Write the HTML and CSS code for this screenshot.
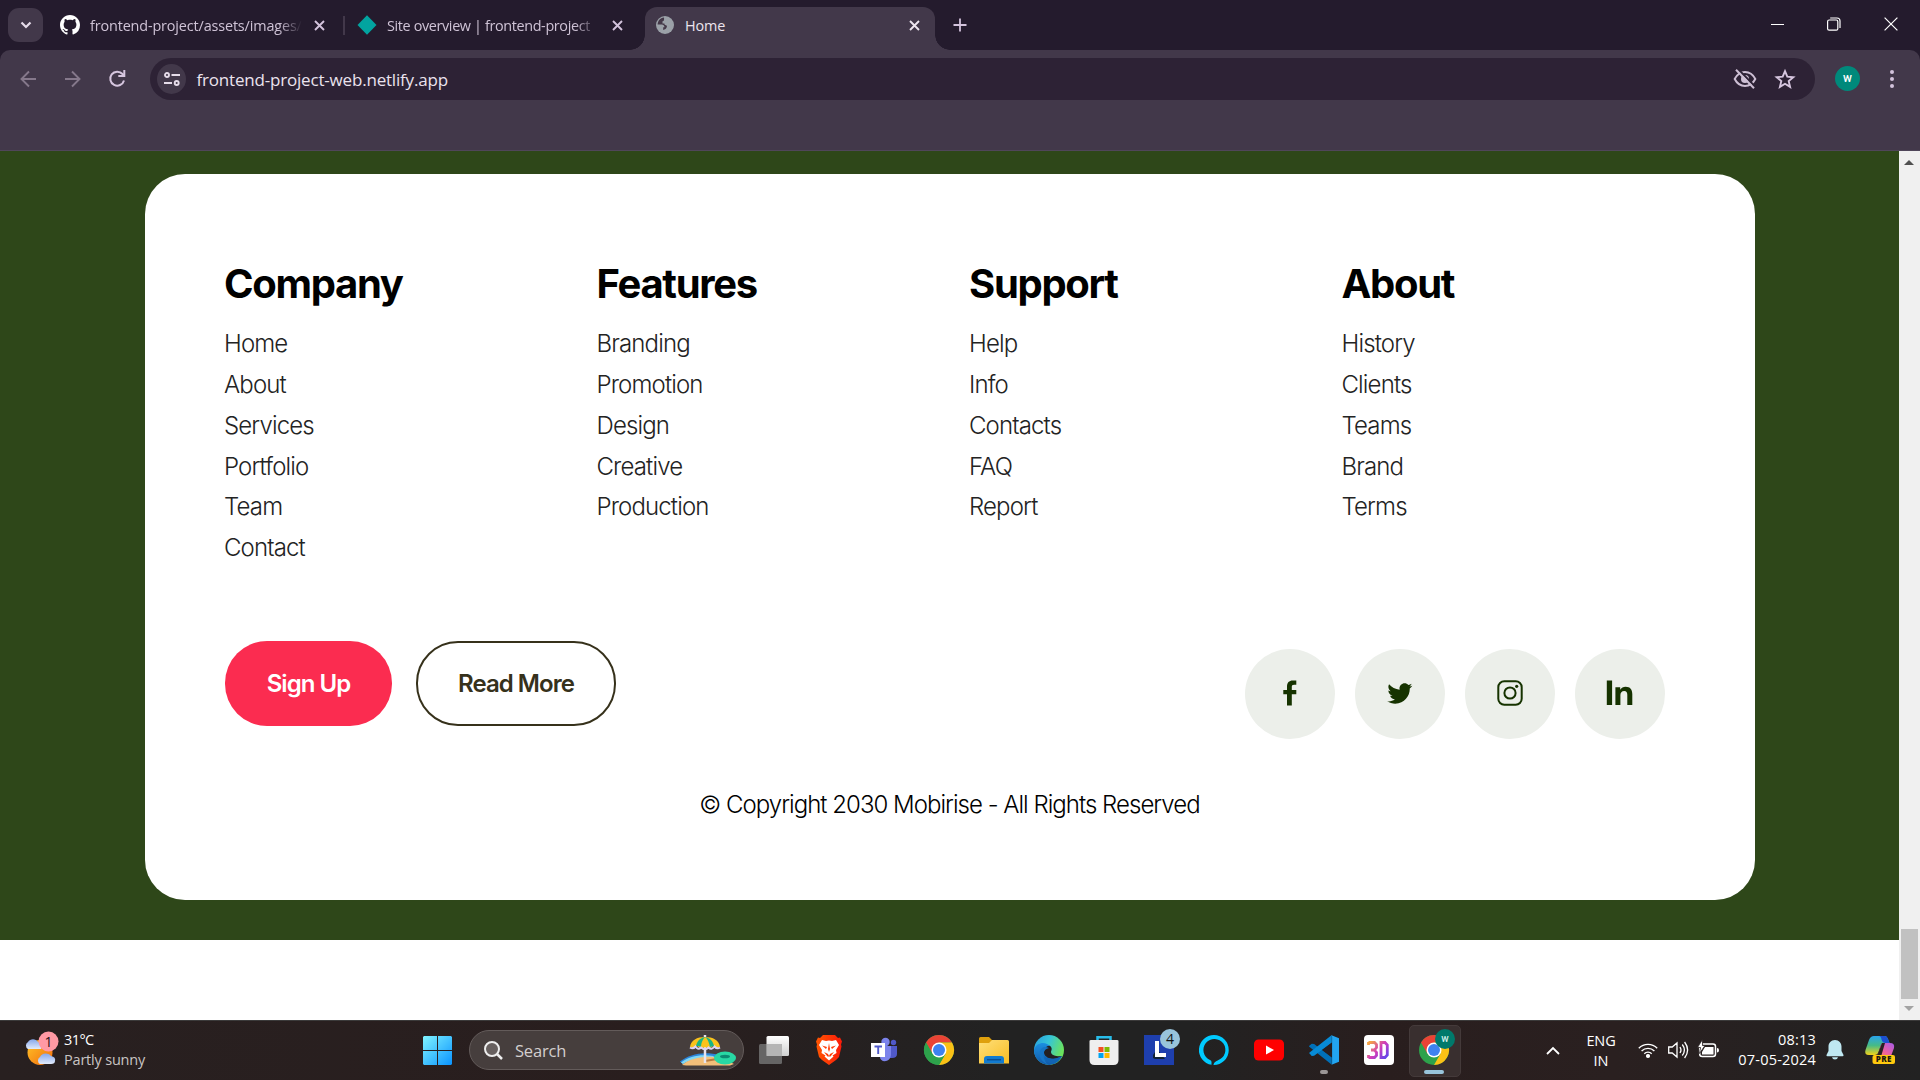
FILE: index.html
```html
<!DOCTYPE html>
<html lang="en">
<head>
<meta charset="utf-8">
<title>Home</title>
<link rel="stylesheet" href="styles.css">
</head>
<body>
<div class="screen">
  <header class="tabstrip">
    <div class="tab-search"><svg width="12" height="8" viewBox="0 0 12 8"><path d="M1.5 1.5 6 6l4.500-4.500" fill="none" stroke="#e6dcea" stroke-width="2.200"/></svg></div>
    <div class="tab tab-one">
      <svg width="20" height="20" viewBox="0 0 16 16"><path fill="#fff" d="M8 0C3.580 0 0 3.580 0 8c0 3.540 2.290 6.530 5.470 7.590.4.070.55-.17.55-.38 0-.19-.01-.82-.01-1.490-2.010.37-2.530-.49-2.690-.94-.09-.23-.48-.94-.82-1.130-.28-.15-.68-.52-.01-.53.63-.01 1.080.58 1.230.82.72 1.210 1.870.87 2.330.66.07-.52.28-.87.51-1.070-1.780-.2-3.640-.89-3.640-3.950 0-.87.31-1.590.82-2.150-.08-.2-.36-1.020.08-2.120 0 0 .67-.21 2.200.82.64-.18 1.320-.27 2-.27s1.360.09 2 .27c1.530-1.040 2.200-.82 2.200-.82.44 1.100.16 1.920.08 2.120.51.56.82 1.270.82 2.150 0 3.070-1.870 3.750-3.650 3.950.29.25.54.73.54 1.480 0 1.070-.01 1.930-.01 2.200 0 .21.15.46.55.38A8.010 8.010 0 0 0 16 8c0-4.420-3.580-8-8-8z"/></svg>
      <span class="tab-title">frontend-project/assets/images/</span>
      <svg class="x" width="11" height="11" viewBox="0 0 11 11"><path d="M1 1l9 9M10 1l-9 9"/></svg>
    </div>
    <i class="tab-sep"></i>
    <div class="tab tab-two">
      <svg width="20" height="20" viewBox="0 0 20 20"><path d="M10 .3 19.500 10 10 19.700.5 10z" fill="#02a4a0"/></svg>
      <span class="tab-title">Site overview | frontend-project</span>
      <svg class="x" width="11" height="11" viewBox="0 0 11 11"><path d="M1 1l9 9M10 1l-9 9"/></svg>
    </div>
    <div class="tab tab-active">
      <svg width="18" height="18" viewBox="0 0 18 18"><circle cx="9" cy="9" r="9" fill="#9ba1a8"/><path d="M8 1.600C4 2 1.800 5 1.600 8.600h4.200c1.500 0 2.700 1.200 2.700 2.700h-1.300v2.600c1.800 0 3.200-1.200 3.600-2.800.3-1 .1-1.800-.9-1.900-.9-.1-1.500-.8-1.500-1.700H6.500V5.300c1.700-.2 1.700-1.300 1.500-3.700z" fill="#443848"/><path d="M11.200 4.200c-.2 1.500.7 2.300 2 2.400.5 1.700 1.600 2.400 3 2 0-3-1.600-5.300-4-6.500-.7.500-1.200 1.200-1 2.100zM4 12.500c1.200 2 2.600 2.900 4.500 3.600" fill="#9ba1a8"/></svg>
      <span class="tab-title">Home</span>
      <svg class="x x-on" width="11" height="11" viewBox="0 0 11 11"><path d="M1 1l9 9M10 1l-9 9"/></svg>
    </div>
    <svg class="plus" width="14" height="14" viewBox="0 0 14 14"><path d="M7 .5v13M.5 7h13" stroke="#d3c3dc" stroke-width="1.800"/></svg>
    <div class="win">
      <svg width="14" height="14" viewBox="0 0 14 14"><path d="M1 7.500h13" stroke="#fff"/></svg>
      <svg width="14" height="14" viewBox="0 0 14 14" fill="none" stroke="#fff" stroke-width="1.200"><rect x=".6" y="3" width="10.200" height="10.200" rx="1.500"/><path d="M3.200 1H10c2 0 3 1.200 3 3v7"/></svg>
      <svg width="14" height="14" viewBox="0 0 14 14"><path d="M.6.6l12.800 12.800M13.400.6.6 13.400" stroke="#fff" stroke-width="1.200"/></svg>
    </div>
  </header>

  <div class="toolbar">
    <div class="bar">
      <svg width="16" height="18" viewBox="0 0 16 18" fill="none" stroke="#85788b" stroke-width="1.900"><path d="M16 9H1.500M9 1.500 1.500 9 9 16.500"/></svg>
      <svg class="fwd" width="16" height="18" viewBox="0 0 16 18" fill="none" stroke="#85788b" stroke-width="1.900"><path d="M0 9h14.500M7 1.500 14.500 9 7 16.500"/></svg>
      <svg class="reload" width="17" height="17" viewBox="0 0 17 17"><path d="M15 10.500A7 7 0 1 1 13.500 4l1.500 1.700" fill="none" stroke="#d6c6df" stroke-width="2"/><path d="M16.300 0v7H9.300V5h5V0z" fill="#d6c6df"/></svg>
      <div class="omnibox">
        <div class="site-info"><svg width="16" height="14" viewBox="0 0 16 14" fill="none" stroke="#e6dcea" stroke-width="1.900"><circle cx="3" cy="3" r="2"/><path d="M7.500 3H16M0 11h8"/><circle cx="12.700" cy="11" r="2"/></svg></div>
        <span class="url">frontend-project-web.netlify.app</span>
        <svg class="eye" width="24" height="20" viewBox="0 0 24 20" fill="none" stroke="#cdbfd4" stroke-width="2"><path d="M1.700 10C4 5.500 7.500 3 12 3s8 2.500 10.300 7C20 14.500 16.500 17 12 17S4 14.500 1.700 10z"/><circle cx="12" cy="10" r="4" fill="#cdbfd4" stroke="none"/><path d="M4.700-.3l18 18.500" stroke="#2d2235" stroke-width="2"/><path d="M3 .8l18 18.400"/></svg>
        <svg width="20" height="20" viewBox="0 0 20 20"><path d="M10 2.200l2.300 5.500 6 .5-4.600 3.900 1.400 5.800L10 14.800l-5.100 3.100 1.400-5.800L1.700 8.200l6-.5z" fill="none" stroke="#d6c6df" stroke-width="1.900"/></svg>
      </div>
      <div class="avatar">w</div>
      <svg class="dots" width="4" height="18" viewBox="0 0 4 18" fill="#d3c3dc"><circle cx="2" cy="2" r="2"/><circle cx="2" cy="9" r="2"/><circle cx="2" cy="16" r="2"/></svg>
    </div>
  </div>

  <main class="viewport">
    <div class="page">
      <section class="green">
        <div class="card">
          <div class="cols">
            <div class="col"><h2>Company</h2><ul><li>Home</li><li>About</li><li>Services</li><li>Portfolio</li><li>Team</li><li>Contact</li></ul></div>
            <div class="col"><h2>Features</h2><ul><li>Branding</li><li>Promotion</li><li>Design</li><li>Creative</li><li>Production</li></ul></div>
            <div class="col"><h2>Support</h2><ul><li>Help</li><li>Info</li><li>Contacts</li><li>FAQ</li><li>Report</li></ul></div>
            <div class="col"><h2>About</h2><ul><li>History</li><li>Clients</li><li>Teams</li><li>Brand</li><li>Terms</li></ul></div>
          </div>
          <div class="actions">
            <a class="btn btn-fill">Sign Up</a>
            <a class="btn btn-line">Read More</a>
            <div class="social">
              <a><svg width="14" height="26" viewBox="0 0 14 26"><path d="M4 25.500V14.300H.3V9.900H4V6.700C4 2.500 6 .4 9.800.4h3.500v4.400h-2.200c-1.800 0-2.300.7-2.300 2.200v2.900h4.500v4.400H8.800v11.200z"/></svg></a>
              <a><svg width="25" height="25" viewBox="14 0 512 512"><path d="M459.370 151.716c.325 4.548.325 9.097.325 13.645 0 138.720-105.583 298.558-298.558 298.558-59.452 0-114.680-17.219-161.137-47.106 8.447.974 16.568 1.299 25.340 1.299 49.055 0 94.213-16.568 130.274-44.832-46.132-.975-84.792-31.188-98.112-72.772 6.498.974 12.995 1.624 19.818 1.624 9.421 0 18.843-1.300 27.614-3.573-48.081-9.747-84.143-51.980-84.143-102.985v-1.299c13.969 7.797 30.214 12.670 47.431 13.319-28.264-18.843-46.781-51.005-46.781-87.391 0-19.492 5.197-37.360 14.294-52.954 51.655 63.675 129.300 105.258 216.365 109.807-1.624-7.797-2.599-15.918-2.599-24.040 0-57.828 46.782-104.934 104.934-104.934 30.213 0 57.502 12.670 76.670 33.137 23.715-4.548 46.456-13.320 66.599-25.340-7.798 24.366-24.366 44.833-46.132 57.827 21.117-2.273 41.584-8.122 60.426-16.243-14.292 20.791-32.161 39.308-52.628 54.253z"/></svg></a>
              <a><svg width="26" height="26" viewBox="0 0 26 26"><rect x="1.300" y="1.300" width="23.400" height="23.400" rx="6" fill="none" stroke="#163300" stroke-width="2"/><circle cx="13" cy="13" r="5.600" fill="none" stroke="#163300" stroke-width="2"/><circle cx="19.700" cy="6.300" r="1.600"/></svg></a>
              <a><svg width="28" height="26" viewBox="0 0 28 26"><path d="M.8.600h5.300v24.400H.8zM9.400 7.200h4.800v2.500c1.200-2 3-3 5.400-3 4.600 0 6.700 2.800 6.700 7.300v11h-5V14.800c0-2.500-.9-3.900-3.100-3.900-2.500 0-3.800 1.700-3.800 4.300V25h-5z"/></svg></a>
            </div>
          </div>
          <p class="copy">© Copyright 2030 Mobirise - All Rights Reserved</p>
        </div>
      </section>
    </div>
    <aside class="scroll">
      <svg width="10" height="5" viewBox="0 0 10 5"><path d="M5 0l5 5H0z" fill="#505050"/></svg>
      <i class="thumb"></i>
      <svg width="10" height="5" viewBox="0 0 10 5"><path d="M0 0h10L5 5z" fill="#a3a3a3"/></svg>
    </aside>
  </main>

  <footer class="taskbar">
    <div class="weather">
      <svg width="36" height="36" viewBox="0 0 36 36">
        <defs><linearGradient id="sun" x1="0" y1="0" x2="1" y2="1"><stop offset="0" stop-color="#ffc628"/><stop offset="1" stop-color="#f26a0c"/></linearGradient><linearGradient id="cloud" x1="0" y1="0" x2="0" y2="1"><stop offset="0" stop-color="#86a7ea"/><stop offset="1" stop-color="#e2ebfb"/></linearGradient></defs>
        <circle cx="16" cy="21.500" r="12.500" fill="url(#sun)"/>
        <path d="M4 18a4 4 0 0 1 0-7 6 6 0 0 1 10 0q4 1 3 7z" fill="url(#cloud)"/>
        <path d="M16 33a4 4 0 0 1 0-7 6.500 6.500 0 0 1 11-1q5 1 4 5 0 3-4 3z" fill="url(#cloud)"/>
        <circle cx="24.500" cy="10.500" r="10" fill="#ff99a4"/>
        <text x="24.500" y="15.600" text-anchor="middle" font-size="14" fill="#241015">1</text>
      </svg>
      <div class="temp"><b>31°C</b><span>Partly sunny</span></div>
    </div>

    <svg class="start" width="29" height="29" viewBox="0 0 29 29"><defs><linearGradient id="win" x1="0" y1="0" x2="1" y2="1" ><stop offset="0" stop-color="#80f4ff"/><stop offset="1" stop-color="#0a93ff"/></linearGradient></defs><path d="M1 0h13v14H0V1zM15 0h13l1 1v13H15zM0 15h14v14H1l-1-1zM15 15h14v13l-1 1H15z" fill="url(#win)"/></svg>

    <div class="search">
      <svg width="19" height="19" viewBox="0 0 19 19"><circle cx="8" cy="8" r="7" fill="#67605f" stroke="#eee" stroke-width="2"/><path d="M13 13l5 5" stroke="#eee" stroke-width="2.500"/></svg>
      <span>Search</span>
      <svg class="beach" width="56" height="32" viewBox="0 0 56 32">
        <path d="M0 27.500C10 20 23 17 40 21l-2 3C22 22 12 24 3 30z" fill="#2c86dc"/><path d="M1 28.500C10 22 20 20 34 22l-2 3C20 23 10 26 3 30z" fill="#80d8f5"/>
        <path d="M2 31C12 22 34 21 44 25l10 5-4 1.500H6z" fill="#f3bf7a"/>
        <path d="M25 27l12-2" stroke="#b87b40" stroke-width="2"/>
        <path d="M25 1v28" stroke="#e7e4ee" stroke-width="2.500"/>
        <path d="M10 13C11 6 17 3 25 3s14 3 15 10l-3 1-4-2-4 3-4-2-4 2-4-3-4 2z" fill="#fbc21c"/>
        <path d="M16 12c1-5 4-8 9-9-3 3-4 7-4 10l-3-1zM25 3c5 1 8 4 9 9l-4 1c-1-4-2-8-5-10z" fill="#19b587"/>
        <path d="M10 13.500q3 2 5.500-1 2.500 4 5.500 1 4 3.500 7.500 0 3 3 6-1 2.500 3 5.500 1" stroke="#ddd4f7" stroke-width="2" fill="none"/>
        <ellipse cx="45" cy="24" rx="11" ry="6.500" fill="#28d8a4"/><ellipse cx="45" cy="22.500" rx="5" ry="1.800" fill="#0c8a72"/>
      </svg>
    </div>

    <div class="apps">
      <svg width="30" height="30" viewBox="0 0 30 30"><defs><linearGradient id="tv" x1="0" y1="0" x2="0" y2="1"><stop offset="0" stop-color="#fff"/><stop offset="1" stop-color="#d0d0d0"/></linearGradient></defs><rect x="7.500" y="1" width="22.500" height="20" rx="1.500" fill="url(#tv)"/><rect x="0" y="9" width="23" height="20" rx="1.500" fill="#777" fill-opacity=".8"/><path d="M7.500 9H23v12H7.500z" fill="#b5b5b5"/></svg>
      <svg width="30" height="30" viewBox="0 0 30 30"><defs><linearGradient id="br" x1="0" y1="0" x2="1" y2="0"><stop offset="0" stop-color="#ff5601"/><stop offset="1" stop-color="#fb1a0a"/></linearGradient></defs><path d="M9 0h12l3 3 2-.5 2 4-1 3 .5 2L25 22l-3 3-7 5-7-5-3-3L2.500 11.500 3 9.500l-1-3 2-4L6 3z" fill="url(#br)"/><path d="M8 5l4 1 3-.500 3 .5 4-1 3 5-3 5 .5 3-4 2.500 1 1-4.500 4-4.500-4 1-1L7.500 18l.5-3-3-5z" fill="#fff"/><path d="M8 10.500l5 1.500-1 2zM22 10.500l-5 1.500 1 2zM15 8l1 6-1 3-1-3zM10 17l4 2 1 2 1-2 4-2-3.500 4.500h-3z" fill="#ff3b05"/></svg>
      <svg width="30" height="30" viewBox="0 0 30 30"><circle cx="16.500" cy="7" r="4.200" fill="#7b83eb"/><circle cx="24.500" cy="7.500" r="2.700" fill="#5059c9"/><path d="M20 11h8v8q0 4-5 4h-3z" fill="#5059c9"/><path d="M11 11h11v8c0 9-11 9-11 3z" fill="#7b83eb"/><rect x="2" y="8" width="14" height="14" fill="#fff"/><path d="M5.500 11.500h7.500M9.200 11.500V19" stroke="#5059c9" stroke-width="1.900"/></svg>
      <svg width="30" height="30" viewBox="0 0 48 48"><circle cx="24" cy="24" r="24" fill="#34a853"/><path d="M3.200 12A24 24 0 0 1 44.800 12H24L13.600 30z" fill="#ea4335"/><path d="M24 12h20.800A24 24 0 0 1 24 48l10.400-18z" fill="#fbc116"/><path d="M13.600 30 3.200 12A24 24 0 0 0 24 48l10.400-18z" fill="#2da24b"/><circle cx="24" cy="24" r="12" fill="#fff"/><circle cx="24" cy="24" r="9.600" fill="#3e82f1"/></svg>
      <svg width="30" height="30" viewBox="0 0 30 30"><defs><linearGradient id="fo" x1="0" y1="0" x2="1" y2="1"><stop offset="0" stop-color="#ffdf79"/><stop offset="1" stop-color="#f8bd24"/></linearGradient></defs><path d="M0 3.500Q0 2 1.500 2H10l3 3h7v8H0z" fill="#dfa00d"/><path d="M0 8h10l3-3h15.500Q30 5 30 6.500V28.500H0z" fill="url(#fo)"/><path d="M5 28.500V24q0-3 3-3h14q3 0 3 3v4.500z" fill="#127bd0"/><path d="M8 24.700h14" stroke="#0b4f94" stroke-width="1.500"/></svg>
      <svg width="30" height="30" viewBox="0 0 30 30"><defs><linearGradient id="e1" x1="0" y1="0" x2="1" y2=".4"><stop offset="0" stop-color="#279ddf"/><stop offset=".5" stop-color="#36c5d8"/><stop offset="1" stop-color="#6be35c"/></linearGradient><linearGradient id="e2" x1="0" y1="0" x2="0" y2="1"><stop offset="0" stop-color="#1b8fe0"/><stop offset="1" stop-color="#1259a8"/></linearGradient></defs><circle cx="15" cy="15" r="15" fill="url(#e1)"/><path d="M0 15C2 8 9 7 13 9c4 2 5 4 4 7-3 4 4 7 11 5C24 28 17 30 15 30A15 15 0 0 1 0 15z" fill="url(#e2)"/><path d="M10 18c0-4 3-8 6-7 3 2 1 5 1 6 0 4 8 5 11 4-3 3-16 5-18-3z" fill="#242021"/><path d="M15 13c-6 1-8 8-2 16C6 26 3 18 8 13q3-2 7 0z" fill="#1675c5"/><path d="M28 21q-2 5-8 8-8-1-10-8 6 6 18 0z" fill="#1164b4"/></svg>
      <svg width="30" height="30" viewBox="0 0 30 30"><path d="M8.500 8V2.200h13V8" fill="none" stroke="#28bdea" stroke-width="2.500"/><path d="M.5 6Q.5 5 2 5h26q1.500 0 1.500 1v19q0 5-5 5h-19q-5 0-5-5z" fill="#efefef"/><path fill="#f25022" d="M9.500 12h5v5h-5z"/><path fill="#7fba00" d="M15.500 12h5v5h-5z"/><path fill="#00a4ef" d="M9.500 18h5v5h-5z"/><path fill="#ffb900" d="M15.500 18h5v5h-5z"/></svg>
      <div class="app"><svg width="30" height="30" viewBox="0 0 30 30"><path fill="#1e3fae" d="M0 0h30v30H0z"/><path d="M9 20v3l2 1h10l-8-10z" fill="#123"/><path d="M11 6h4v12h7v4H11z" fill="#fff"/></svg><span class="badge">4</span></div>
      <svg width="30" height="30" viewBox="0 0 30 30"><path d="M15 0a15 15 0 0 0-2.500 29.800V27Q12.500 25.500 11 25A11 11 0 1 1 19 25.300C17 26.500 15 27 14.500 30A15 15 0 0 0 15 0z" fill="#00caff"/></svg>
      <svg width="30" height="30" viewBox="0 0 30 30"><rect y="4.500" width="30" height="21" rx="4.500" fill="#f00"/><path d="M12 10.500l8 4.500-8 4.500z" fill="#fff"/></svg>
      <div class="app run"><svg width="30" height="30" viewBox="0 0 100 100"><path d="M2 35l7-6 8 1 59 45v24L2 40c-3-2-3-3 0-5z" fill="#0070b8"/><path d="M2 62l7 8 8-1 59-44V0L2 58c-2 1-2 3 0 4z" fill="#078bd6"/><path d="M73 0 100 11v78L73 100c3-1 4-3 4-7V7c0-4-1-6-4-7z" fill="#22a5f1"/><path d="M76 27 45 50l31 23z" fill="#271f20"/></svg></div>
      <svg width="30" height="30" viewBox="0 0 30 30"><defs><linearGradient id="d3" gradientUnits="userSpaceOnUse" x1="4" y1="5" x2="25" y2="25"><stop offset=".1" stop-color="#f5a445"/><stop offset=".5" stop-color="#cf3cbc"/><stop offset=".9" stop-color="#5b48ee"/></linearGradient></defs><rect width="30" height="30" rx="4" fill="#fff"/><path d="M4.500 7.500h6l2 2v3l-2 2.500 2 2.500v3l-2 2h-6M7 15h3.500M17 7.500h4l2.300 2.500v10L21 22.500h-4zM4.500 7v3M4.500 20v3" fill="none" stroke="url(#d3)" stroke-width="2.800"/></svg>
      <div class="app on"><svg width="30" height="30" viewBox="0 0 48 48"><circle cx="24" cy="24" r="24" fill="#2da24b"/><path d="M3.200 12A24 24 0 0 1 44.800 12H24L13.600 30z" fill="#ea4335"/><path d="M24 12h20.800A24 24 0 0 1 24 48l10.400-18z" fill="#fbc116"/><circle cx="24" cy="24" r="12" fill="#fff"/><circle cx="24" cy="24" r="9.600" fill="#3e82f1"/></svg><span class="badge badge-w">w</span></div>
    </div>

    <div class="tray">
      <svg width="14" height="9" viewBox="0 0 14 9"><path d="M1 8l6-6 6 6" fill="none" stroke="#fff" stroke-width="1.800"/></svg>
      <div class="lang"><span>ENG</span><span>IN</span></div>
      <svg class="wifi" width="20" height="16" viewBox="0 0 20 16" fill="none" stroke="#fff" stroke-width="1.400"><path d="M.8 6.200a13 13 0 0 1 18.400 0M3.600 9a9 9 0 0 1 12.800 0M6.300 11.700a5.200 5.200 0 0 1 7.400 0"/><circle cx="10" cy="14" r="1.400" fill="#fff"/></svg>
      <svg class="vol" width="20" height="18" viewBox="0 0 20 18" fill="none" stroke="#fff" stroke-width="1.300"><path d="M.7 6h3.500L9 2v14l-4.800-4H.7zM12 6q2 3 0 6M14.300 3.500q4.200 5.500 0 11M16.600 1q6 8 0 16"/></svg>
      <svg class="bat" width="21" height="17" viewBox="0 0 21 17"><rect x="1.700" y="3" width="15.800" height="12.500" rx="2.500" fill="none" stroke="#fff" stroke-width="1.500"/><path d="M19 7q2 0 2 2.200T19 11.500zM7 6h8.500v7.500H4V11z" fill="#fff"/><path d="M4.500-1.500-.5 6.500h3L1.500 12.500 7 4.500H4.500z" fill="#fff" stroke="#271f20" stroke-width=".8"/></svg>
      <div class="clock"><span>08:13</span><span>07-05-2024</span></div>
      <svg class="bell" width="18" height="20" viewBox="0 0 18 20" fill="#bfe8f2"><path d="M9 0C5 0 2.500 3 2.500 6.500V11L.5 15q-.3 1.200 1 1.200h15q1.300 0 1-1.200l-2-4V6.500C15.500 3 13 0 9 0zM6 17.300h6Q11.500 19.500 9 19.500T6 17.300z"/></svg>
      <svg class="pilot" width="31" height="30" viewBox="0 0 31 30">
        <defs><linearGradient id="c1" x1="0" y1="0" x2="0" y2="1"><stop offset="0" stop-color="#29a4ec"/><stop offset=".5" stop-color="#46bb86"/><stop offset="1" stop-color="#f2d21a"/></linearGradient><linearGradient id="c2" x1="1" y1="0" x2="0" y2="1"><stop offset="0" stop-color="#a45be8"/><stop offset=".6" stop-color="#f0619f"/><stop offset="1" stop-color="#ff9340"/></linearGradient></defs>
        <path d="M9 1h11q2 0 3 3l1.500 4h-6q-2 0-3 3l-2 6q-1 3-4 3H4q-5 0-3.500-5L4 5q1.500-4 5-4z" fill="url(#c1)"/>
        <path d="M14 1h6q2 0 3 3l1.500 4h-4q-3 0-4-3.500Q16 1 14 1z" fill="#1c4fd0"/>
        <path d="M18.500 8H25q5 0 4 5l-3 8H11q2-1 3-4l1.500-6q1-3 3-3z" fill="url(#c2)"/>
        <path d="M17 8h3l-3.500 12h-4z" fill="#2a2122"/>
        <rect x="7.500" y="20" width="22.500" height="9" rx="2" fill="#ffc90e"/>
        <text x="18.800" y="27.400" text-anchor="middle" font-size="8" font-weight="800" letter-spacing=".4" fill="#1d1a10">PRE</text>
      </svg>
    </div>
  </footer>
</div>
</body>
</html>
```
FILE: styles.css
```css
* { box-sizing: border-box; }
body { margin: 0; background: #fff; font-family: "Open Sans", "Noto Sans", sans-serif; }
svg { display: block; flex: none; overflow: visible; }
.screen { width: 1920px; height: 1080px; display: flex; flex-direction: column; overflow: hidden; }

/* tab strip */
.tabstrip { height: 50px; flex: none; background: #241b2d; display: flex; align-items: flex-start; padding-left: 8px; }
.tab-search { width: 35px; height: 34px; margin-top: 8px; border-radius: 11px; background: #42384a; display: flex; align-items: center; justify-content: center; }
.tab { display: flex; align-items: center; height: 50px; font-size: 14.4px; letter-spacing: -0.08px; color: #cfc3d6; }
.tab-title { white-space: nowrap; line-height: 24px; padding-top: 2px; }
.tab-one { margin-left: 17px; width: 266px; }
.tab-one .tab-title { margin-left: 10px; width: 212px; letter-spacing: -0.14px; }
.tab-two { margin-left: 12px; width: 266px; }
.tab-two .tab-title { margin-left: 10px; width: 211px; letter-spacing: -0.36px; }
.tab-one .tab-title, .tab-two .tab-title { -webkit-mask-image: linear-gradient(90deg, #000 89%, transparent); mask-image: linear-gradient(90deg, #000 89%, transparent); }
.x { margin-left: auto; }
.x path { stroke: #d3c3dc; stroke-width: 1.9; }
.x-on path { stroke: #eee6f0; }
.tab-one .x { margin-right: 1px; }
.tab-sep { width: 2px; height: 19px; margin: 16px 0 0 17px; background: #42384a; }
.tab-active { position: relative; margin: 7px 0 0 22px; width: 290px; height: 43px; padding: 0 15px 7px 11px; border-radius: 12px 12px 0 0; background: #42384a; color: #ece4ee; }
.tab-active .tab-title { margin-left: 11px; }
.tab-active::before, .tab-active::after { content: ""; position: absolute; bottom: 0; width: 15px; height: 15px; }
.tab-active::before { left: -15px; background: radial-gradient(circle at 0 0, transparent 14.5px, #42384a 15px); }
.tab-active::after { right: -15px; background: radial-gradient(circle at 100% 0, transparent 14.5px, #42384a 15px); }
.plus { margin: 18px 0 0 18px; }
.win { display: flex; gap: 43px; margin: 17px 22px 0 auto; }

/* toolbar */
.toolbar { height: 101px; flex: none; background: #241b2d; }
.bar { height: 101px; background: #42384a; border-radius: 10px 10px 0 0; border-bottom: 1px solid #50465a; display: flex; align-items: flex-start; padding-left: 20px; }
.bar > svg { margin-top: 20px; }
.bar > .fwd { margin-left: 29px; }
.bar > .reload { margin-left: 28px; }
.omnibox { margin: 8px 0 0 24px; width: 1665px; height: 42px; border-radius: 21px; background: #2d2235; display: flex; align-items: center; padding: 0 20px 0 7px; }
.site-info { width: 29px; height: 30px; border-radius: 50%; background: #42384a; display: flex; align-items: center; justify-content: center; }
.url { margin-left: 10.5px; font-size: 17px; letter-spacing: -0.19px; color: #ebe3ee; }
.eye { margin: 0 18px 0 auto; }
.avatar { margin: 16px 0 0 20px; width: 25px; height: 25px; border-radius: 50%; background: #00897b; color: #fff; font: 500 12px/24px Roboto, sans-serif; text-align: center; }
.bar > .dots { margin-left: 30px; }

/* web page */
.viewport { height: 869px; flex: none; display: flex; background: #fff; }
.page { flex: 1; min-width: 0; }
.green { height: 789px; background: #2e4719; padding: 23px 144px 0 145px; }
.card { height: 726px; border-radius: 40px; background: #fff; padding: 87px 90px 0 80px; font-family: Inter, sans-serif; display: flex; flex-direction: column; }
.cols { display: grid; grid-template-columns: repeat(4, 372.5px); width: 1440px; height: 380px; margin-left: -1px; }
h2 { margin: 0; font-size: 40px; line-height: 46px; font-weight: 700; letter-spacing: -1.3px; color: #000; }
ul { list-style: none; margin: 17.4px 0 0; padding: 0; }
li { font-size: 24px; line-height: 40.75px; font-weight: 300; letter-spacing: -0.86px; color: #232323; }
.actions { display: flex; align-items: flex-start; }
.btn { height: 85px; border-radius: 42px; display: flex; align-items: center; justify-content: center; font-size: 24px; font-weight: 600; letter-spacing: -0.95px; }
.btn-fill { width: 167px; background: #fb2c50; color: #fff; }
.btn-line { width: 200px; margin-left: 24px; border: 2px solid #36311b; color: #36311b; }
.social { display: flex; gap: 20px; margin: 8px 0 0 auto; }
.social a { width: 90px; height: 90px; border-radius: 50%; background: #ecefea; display: flex; align-items: center; justify-content: center; padding-bottom: 2px; }
.social svg { fill: #163300; }
.copy { margin: 50px -9px 0 0; text-align: center; font-size: 24px; line-height: 32px; font-weight: 300; letter-spacing: -0.98px; color: #000; white-space: nowrap; }
.scroll { flex: none; width: 21px; background: #f0f0f0; display: flex; flex-direction: column; align-items: center; padding: 9px 1px 9px 0; }
.thumb { width: 17px; height: 70px; margin: auto 0 7px; background: #c1c1c1; }

/* taskbar */
.taskbar { height: 60px; flex: none; border-top: 1px solid #3b3a3a; padding-bottom: 1px; background: linear-gradient(90deg, #282020, #291e1e 35%, #222 52%, #222 62%, #291e1e 72%, #2a2020 84%, #222 100%); display: flex; align-items: center; color: #fff; }
.weather { width: 423px; padding-left: 24px; display: flex; align-items: center; }
.weather svg { margin-top: -2px; }
.temp { margin-left: 4px; display: flex; flex-direction: column; font-size: 14.5px; line-height: 20px; letter-spacing: -0.2px; }
.temp b { font-weight: 400; letter-spacing: -0.6px; }
.temp span { color: #c9c5c4; }
.search { margin: 0 15px 0 17px; width: 275px; height: 40px; border: 1px solid #635b5a; border-radius: 20px; background: #463e3d; display: flex; align-items: center; padding: 0 7px 0 14px; }
.search span { margin-left: 12px; font-size: 16.5px; letter-spacing: -0.2px; color: #d3cfce; }
.beach { margin-left: auto; }
.apps { display: flex; gap: 25px; }
.app { position: relative; width: 30px; height: 30px; z-index: 0; }
.badge { position: absolute; left: 16px; top: -6px; width: 20px; height: 20px; border-radius: 50%; background: #98c4db; color: #111; font-size: 14px; line-height: 19px; text-align: center; }
.badge-w { background: #00796b; color: #d2eeea; font: 500 10px/19px Roboto, sans-serif; }
.run::after, .on::after { content: ""; position: absolute; bottom: -9px; left: 11px; width: 8px; height: 4px; border-radius: 2px; background: #9b9696; }
.on::after { left: 5px; width: 20px; background: #98c4db; }
.on::before { content: ""; position: absolute; z-index: -1; left: -10px; top: -10px; width: 50px; height: 50px; border: 1px solid #443a3a; border-radius: 5px; background: #392f2f; }
.tray { display: flex; align-items: center; margin-left: 97px; font-size: 14.5px; line-height: 20px; }
.lang, .clock { display: flex; flex-direction: column; }
.lang { width: 40px; margin-left: 21px; align-items: center; letter-spacing: -0.1px; padding-top: 1px; }
.clock { width: 86px; margin-left: 11px; align-items: flex-end; letter-spacing: 0.2px; }
.wifi { margin-left: 17px; }
.vol, .bat { margin-left: 10px; }
.bat { margin-top: -2px; }
.bell { margin-left: 10px; }
.pilot { margin-left: 21px; }
```
